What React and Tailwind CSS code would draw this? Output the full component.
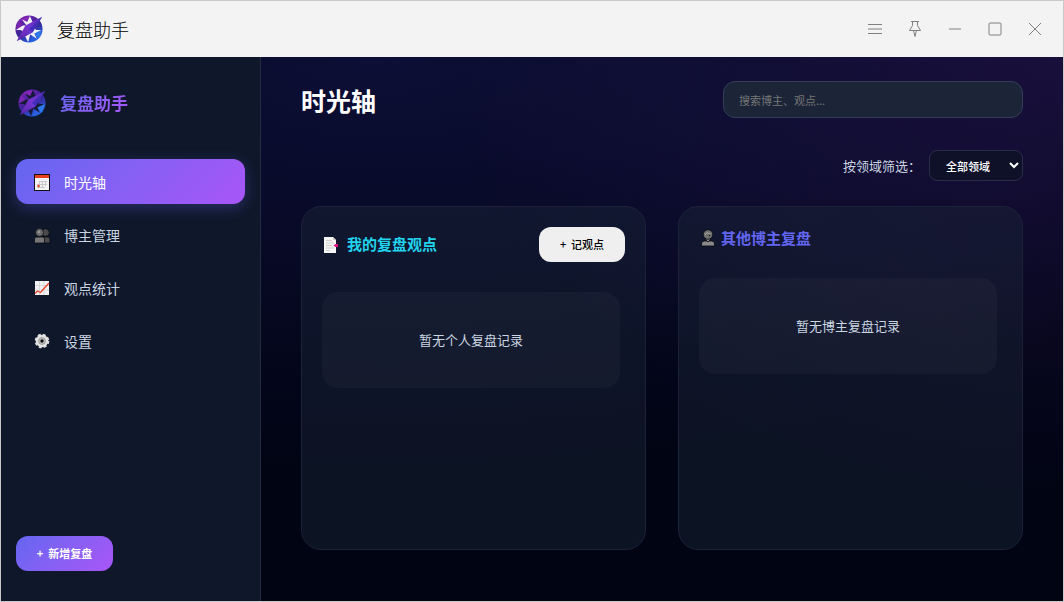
import { useState } from 'react'

function Logo({ rays, className }) {
  return (
    <svg viewBox="0 0 32 32" className={className} aria-hidden="true">
      <defs>
        <linearGradient id="logoDisc" x1="0.2" y1="0" x2="0.8" y2="1">
          <stop offset="0" stopColor="#7d22b4" />
          <stop offset="0.5" stopColor="#3a2496" />
          <stop offset="1" stopColor="#1f6ff0" />
        </linearGradient>
        <linearGradient id="logoNeedle" x1="1" y1="0" x2="0" y2="1">
          <stop offset="0" stopColor="#5a2cb4" />
          <stop offset="0.5" stopColor="#7436d4" />
          <stop offset="1" stopColor="#4a1f9a" />
        </linearGradient>
      </defs>
      <circle cx="16" cy="16" r="15.5" fill="url(#logoDisc)" />
      <path d="M6 5 L16 1 L15 9Z" fill="#9a2cc0" opacity="0.6" />
      <path d="M1 16 L4 7 L10 14Z" fill="#8f28b4" opacity="0.6" />
      <path d="M31 17 L27 27 L21 20Z" fill="#2f8cf4" opacity="0.7" />
      <path d="M17 31 L27 27 L20 22Z" fill="#2a62e4" opacity="0.8" />
      <path d="M17 1 L21 10 L14 13 L8 5 L14 8Z" fill={rays} />
      <path d="M1 17 L9 12 L14 12 L9 20 L7 17Z" fill={rays} />
      <path d="M30 17 L22 21 L25 27 L17 22 L22 14 L24 17Z" fill={rays} />
      <path d="M15 31 L11 23 L18 20Z" fill={rays} />
      <path d="M31 2 L20 20 L2 30 L12 12Z" fill="url(#logoNeedle)" />
      <path d="M31 2 L20 20 L16 16Z" fill="#3a2ab4" opacity="0.8" />
      <path d="M2 30 L12 12 L16 16Z" fill="#7a30c4" opacity="0.5" />
    </svg>
  )
}

function CalendarIcon() {
  return (
    <svg viewBox="0 0 18 18" className="w-[18px] h-[18px]" aria-hidden="true">
      <rect x="1" y="1" width="16" height="17" fill="#111" />
      <rect x="2" y="2" width="14" height="4" fill="#e8401c" />
      <rect x="2" y="5" width="14" height="12" fill="#f4f4f4" />
      <path d="M6 8.5h8M4 11.5h10M4 14.5h8M6.5 8v7M9.5 8v7M12.5 8v5" stroke="#c9c9c9" strokeWidth="1" />
      <circle cx="5.5" cy="13" r="1.2" fill="#e8401c" />
    </svg>
  )
}

function PeopleIcon() {
  return (
    <svg viewBox="0 0 18 18" className="w-[18px] h-[18px]" aria-hidden="true">
      <g stroke="#080a10" strokeWidth="0.8">
        <circle cx="12.5" cy="6.5" r="3.8" fill="#4a4a4a" />
        <path d="M9 17v-4q0-2 2-2h4q2 0 2 2v4z" fill="#4a4a4a" />
        <circle cx="6.5" cy="6.5" r="4" fill="#6c6c6c" />
        <path d="M1.5 17v-4q0-2 2-2h6q2 0 2 2v4z" fill="#777" />
      </g>
      <circle cx="6" cy="6" r="1.2" fill="#999" />
    </svg>
  )
}

function ChartIcon() {
  return (
    <svg viewBox="0 0 18 18" className="w-[18px] h-[18px]" aria-hidden="true">
      <rect x="2" y="2" width="14" height="14" fill="#f2f2f2" />
      <path d="M2 6.5h14M2 11h14M6.5 2v14M11 2v14" stroke="#d2d2d2" strokeWidth="0.8" />
      <path d="M2 14.5l2.5-2.5 3 1.5 3.5-4 5-5.5" stroke="#e8402a" strokeWidth="1.3" fill="none" />
    </svg>
  )
}

function GearIcon() {
  return (
    <svg viewBox="0 0 18 18" className="w-[18px] h-[18px]" aria-hidden="true">
      <circle cx="9" cy="9" r="6.2" fill="#e2e2e2" />
      <circle cx="9" cy="9" r="6.2" fill="none" stroke="#e2e2e2" strokeWidth="2.2" strokeDasharray="2.9 1.97" />
      <circle cx="9" cy="9" r="3.4" fill="#c4c4c4" stroke="#8d8d8d" strokeWidth="0.8" />
      <circle cx="9" cy="9" r="1.7" fill="#111" />
    </svg>
  )
}

function NoteIcon() {
  return (
    <svg viewBox="0 0 18 18" className="w-[18px] h-[18px] shrink-0" aria-hidden="true">
      <path d="M2 1h9l3 3v13H2z" fill="#f5f5f5" />
      <path d="M11 1l3 3h-3z" fill="#c9c9c9" />
      <path d="M4 4.5h6M4 7h8M4 9.5h6M4 12h8M4 14.5h4" stroke="#c2c2c2" strokeWidth="0.8" />
      <path d="M11.5 9.5l2-1.5h2.500v3h-2.500z" fill="#e3108c" />
    </svg>
  )
}

function PersonIcon() {
  return (
    <svg viewBox="0 0 18 18" className="w-[18px] h-[18px] shrink-0" aria-hidden="true">
      <g stroke="#05060a" strokeWidth="0.8">
        <path d="M2.5 17v-2q0-3 3-3h7q3 0 3 3v2z" fill="#8a8a8a" />
        <path d="M6 8h6l-1 3-2 2-2-2z" fill="#8f8f8f" />
        <circle cx="9" cy="5.5" r="4.8" fill="#6f6f6f" />
      </g>
      <path d="M6 6l2-2.500 2 1.500 1.500-.5" stroke="#aaa" strokeWidth="1" fill="none" />
      <circle cx="10.5" cy="6.5" r="0.7" fill="#111" />
    </svg>
  )
}

const windowButtons = [
  { label: '菜单', icon: <path d="M3 5.5h14M3 10h14M3 14.5h14" /> },
  { label: '置顶', icon: <path d="M6 2.5h8M7.5 2.5v4l-3 5h11l-3-5v-4M8.5 11.5l1.5 6 1.5-6" /> },
  { label: '最小化', icon: <path d="M4 10h12" /> },
  { label: '最大化', icon: <rect x="4" y="4" width="12" height="12" rx="1" /> },
  { label: '关闭', icon: <path d="M4 4l12 12M16 4l-12 12" /> },
]

const navItems = [
  { id: 'timeline', label: '时光轴', icon: <CalendarIcon /> },
  { id: 'bloggers', label: '博主管理', icon: <PeopleIcon /> },
  { id: 'stats', label: '观点统计', icon: <ChartIcon /> },
  { id: 'settings', label: '设置', icon: <GearIcon /> },
]

function EmptyRecord({ text }) {
  return (
    <div className="mr-[5px] h-24 flex items-center justify-center rounded-2xl bg-white/3 text-[13px] text-slate-300">
      {text}
    </div>
  )
}

export default function App() {
  const [active, setActive] = useState('timeline')
  const [keyword, setKeyword] = useState('')
  const [field, setField] = useState('all')

  return (
    <div className="min-h-screen flex flex-col border border-[#c8c8c8] bg-[#010413] font-['Noto_Sans_CJK_SC',sans-serif]">
      {/* 标题栏 */}
      <header className="h-14 shrink-0 flex items-center justify-between bg-[#f3f3f3] pl-3 pr-2">
        <div className="flex items-center gap-3">
          <Logo rays="#f3f3f3" className="w-8 h-8 p-0.5" />
          <span className="text-lg leading-6 font-light text-black">复盘助手</span>
        </div>
        <div className="flex">
          {windowButtons.map((b) => (
            <button key={b.label} aria-label={b.label} className="w-10 h-10 flex items-center justify-center">
              <svg viewBox="0 0 20 20" className="w-5 h-5 fill-none stroke-[#808080]" strokeWidth="1">
                {b.icon}
              </svg>
            </button>
          ))}
        </div>
      </header>

      <div className="flex-1 flex">
        {/* 侧边栏 */}
        <aside className="w-[260px] shrink-0 flex flex-col border-r border-[#252b40] bg-[#0f172a] px-[15px] pt-[30px] pb-[30px]">
          <div className="flex items-center gap-3">
            <Logo rays="#141a38" className="w-8 h-8 p-0.5" />
            <span className="text-[17px] leading-6 font-bold bg-linear-135 from-[#6366f1] to-[#a855f7] bg-clip-text text-transparent">
              复盘助手
            </span>
          </div>

          <nav className="mt-10 flex flex-col gap-2">
            {navItems.map((item) => (
              <a
                key={item.id}
                href={`#${item.id}`}
                onClick={() => setActive(item.id)}
                className={`h-[45px] flex items-center gap-[13px] rounded-xl pl-[17px] text-sm ${
                  active === item.id
                    ? 'bg-linear-135 from-[#6366f1] to-[#a855f7] text-white shadow-[0_4px_15px_rgba(99,102,241,0.3)]'
                    : 'text-slate-300'
                }`}
              >
                {item.icon}
                <span>{item.label}</span>
              </a>
            ))}
          </nav>

          <button className="mt-auto self-start w-[97px] h-[35px] rounded-xl text-[11px] font-bold text-white bg-linear-135 from-[#6366f1] to-[#a855f7]">
            +&nbsp; 新增复盘
          </button>
        </aside>

        {/* 主内容 */}
        <main className="flex-1 min-w-0 flex flex-col px-10 pt-6 pb-[51px] bg-[radial-gradient(ellipse_75%_80%_at_100%_0%,rgba(85,40,150,0.25),transparent),radial-gradient(ellipse_120%_75%_at_15%_0%,rgba(50,50,170,0.23),transparent)]">
          <div className="flex items-center justify-between">
            <h1 className="text-[25px] leading-9 font-bold text-white">时光轴</h1>
            <input
              type="text"
              aria-label="搜索"
              value={keyword}
              onChange={(e) => setKeyword(e.target.value)}
              placeholder="搜索博主、观点..."
              className="w-[300px] h-[37px] rounded-xl border border-[#333e56] bg-[#1c2538] px-[15px] text-[11px] text-slate-200 placeholder:text-[#757575] outline-none"
            />
          </div>

          <div className="mt-8 flex items-center justify-end gap-2">
            <label htmlFor="field" className="text-[13px] text-slate-300">
              按领域筛选：
            </label>
            <select
              id="field"
              value={field}
              onChange={(e) => setField(e.target.value)}
              className="w-[94px] h-[31px] rounded-lg border border-[#2a2d48] bg-[#0f1129] pl-3 text-[11px] font-medium text-white"
            >
              <option value="all">全部领域</option>
            </select>
          </div>

          <div className="mt-[25px] flex-1 grid grid-cols-2 gap-8">
            <section className="rounded-[20px] border border-[#1d2138] bg-[#1a2538]/45 p-5">
              <div className="flex items-center justify-between mb-[30px]">
                <h2 className="flex items-center gap-[7px] text-[15px] font-bold text-[#22d3ee]">
                  <NoteIcon />
                  我的复盘观点
                </h2>
                <button className="w-[86px] h-[35px] rounded-xl bg-[#efefef] text-[11px] font-medium text-black">
                  +&nbsp; 记观点
                </button>
              </div>
              <EmptyRecord text="暂无个人复盘记录" />
            </section>

            <section className="rounded-[20px] border border-[#1d2138] bg-[#1a2538]/45 p-5">
              <h2 className="flex items-center gap-1 mb-[30px] text-[15px] leading-[21px] font-bold text-[#6366f1]">
                <PersonIcon />
                其他博主复盘
              </h2>
              <EmptyRecord text="暂无博主复盘记录" />
            </section>
          </div>
        </main>
      </div>
    </div>
  )
}
